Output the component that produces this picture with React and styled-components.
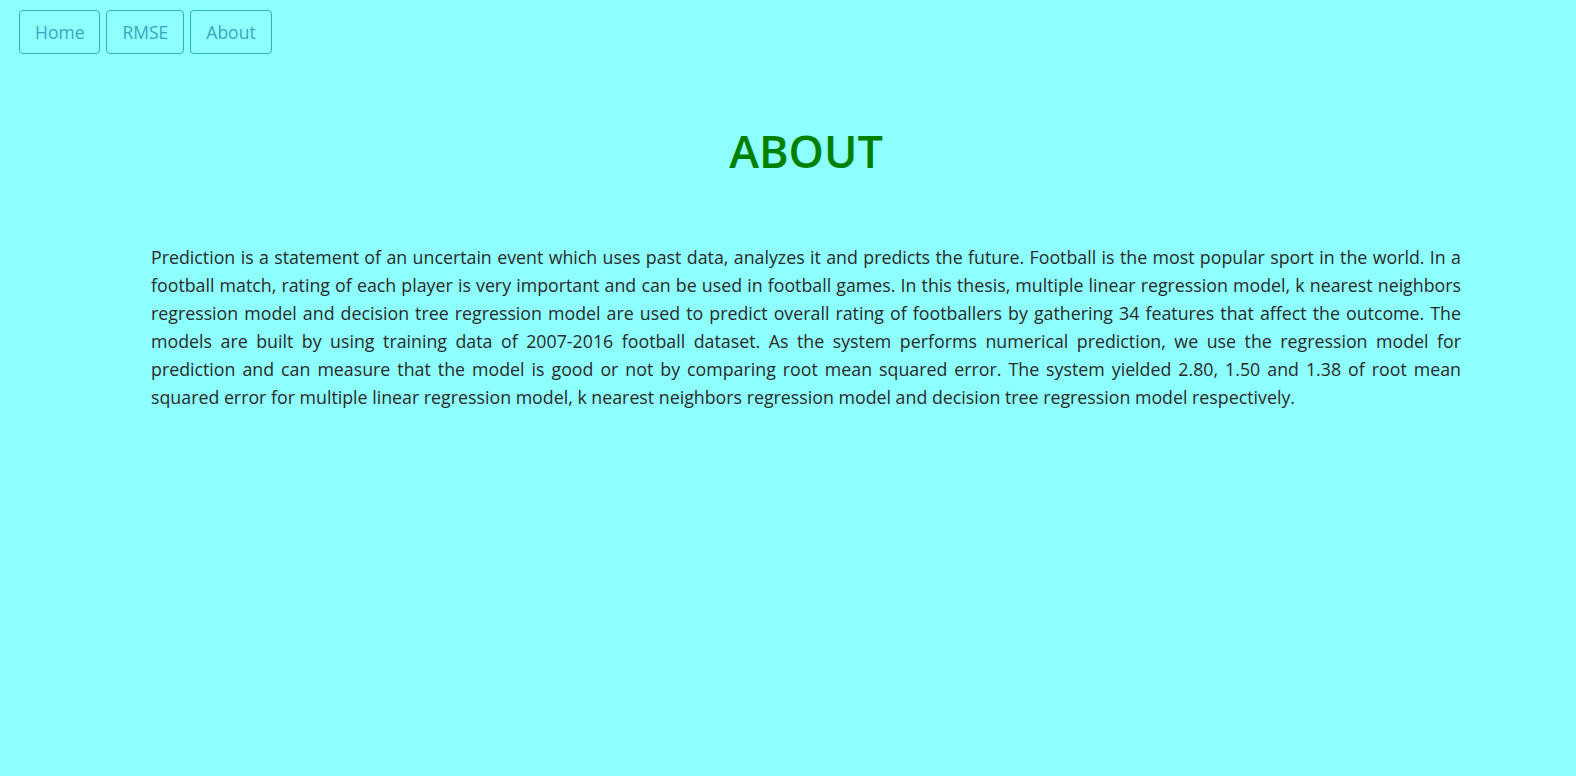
import React from 'react'
import styled, { createGlobalStyle } from 'styled-components'

const GlobalStyle = createGlobalStyle`
  html, body {
    margin: 0;
    padding: 0;
    background: #8cfffe;
    min-height: 100%;
  }
  body {
    font-family: "Open Sans", "Noto Sans", sans-serif;
  }
`

const Page = styled.div`
  min-height: 776px;
  background: #8cfffe;
`

const Nav = styled.nav`
  display: flex;
  gap: 6px;
  padding: 10px 0 0 19px;
`

const NavButton = styled.button`
  height: 44px;
  padding: 0 15px;
  background: transparent;
  border: 1px solid #2eb4c8;
  border-radius: 4px;
  color: #3aa6bd;
  font-family: "Open Sans", "Noto Sans", sans-serif;
  font-size: 17.5px;
  cursor: pointer;
`

const Title = styled.h1`
  margin: 67px 0 0 36px;
  text-align: center;
  color: #008000;
  font-size: 45px;
  font-weight: 600;
  line-height: 60px;
`

const Text = styled.p`
  margin: 62px 115px 0 151px;
  text-align: justify;
  color: #2a2a2a;
  font-size: 17.8px;
  line-height: 28px;
`

const App = () => (
  <Page>
    <GlobalStyle />
    <Nav>
      <NavButton>Home</NavButton>
      <NavButton>RMSE</NavButton>
      <NavButton>About</NavButton>
    </Nav>
    <Title>ABOUT</Title>
    <Text>
      Prediction is a statement of an uncertain event which uses past data, analyzes it and predicts the future. Football is the most popular sport in the world. In a football match, rating of each player is very important and can be used in football games. In this thesis, multiple linear regression model, k nearest neighbors regression model and decision tree regression model are used to predict overall rating of footballers by gathering 34 features that affect the outcome. The models are built by using training data of 2007-2016 football dataset. As the system performs numerical prediction, we use the regression model for prediction and can measure that the model is good or not by comparing root mean squared error. The system yielded 2.80, 1.50 and 1.38 of root mean squared error for multiple linear regression model, k nearest neighbors regression model and decision tree regression model respectively.
    </Text>
  </Page>
)

export default App
